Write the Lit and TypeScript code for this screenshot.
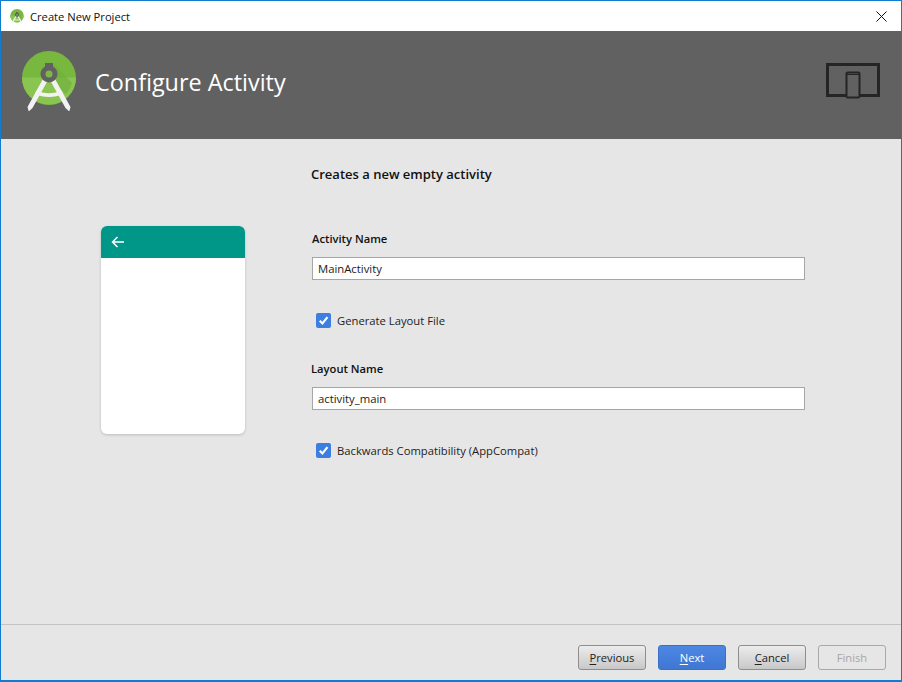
import { LitElement, html, css, svg } from "lit";
import { customElement } from "lit/decorators.js";

const logo = (w: number, h: number) => html`<svg class="logo" width=${w} height=${h} viewBox="0 0 54 60" aria-hidden="true">
  <circle cx="27" cy="27" r="27" fill="#78b83f"/>
  <path d="M0 26.500a27 27 0 0 0 54 0z" fill="#8ac451"/>
  <path d="M32 13 50 32a27 27 0 0 1-6 11L27 30z" fill="#6fae3a" opacity=".6"/>
  <path d="M23 12h8v6h-8z" fill="#616161"/>
  <path d="M21.500 27 5.500 56l1.200 4.500L10.500 57 25.500 30zM32.500 27 48.500 56l-1.200 4.500L43.500 57 28.500 30z" fill="#f2f2f2"/>
  <path d="M14.500 39.500c4 1.800 8 2.700 12.500 2.700s8.500-.9 12.500-2.700l1.700 3.600c-4.300 2-9 3-14.200 3s-9.900-1-14.200-3z" fill="#f2f2f2"/>
  <circle cx="27" cy="23" r="8.500" fill="#616161"/>
  <circle cx="27" cy="23" r="3.500" fill="#7cb843"/>
</svg>`;

const check = svg`<path d="M3.500 7.300 6 9.800l4.700-6" fill="none" stroke="#fff" stroke-width="2"/>`;

@customElement("app-root")
export class AppRoot extends LitElement {
  static styles = css`
    :host { display: block; }
    * { box-sizing: border-box; }
    .window {
      width: 902px; height: 682px; display: flex; flex-direction: column;
      border: 1px solid #0f7ccf; border-bottom-width: 2px; background: #e6e6e6;
      font-family: "Open Sans", "Noto Sans", sans-serif; color: #111; overflow: hidden;
    }
    .titlebar {
      height: 30px; flex: none; background: #fff; display: flex; align-items: center;
      padding: 0 14px 0 9px; gap: 6px; font-size: 11.2px;
    }
    .titlebar .name { flex: 1; }
    .close { display: block; }
    .header {
      height: 108px; flex: none; background: #616161; display: flex; align-items: center;
      padding: 0 21px 8px 21px;
    }
    .header h1 {
      flex: 1; margin: 2px 0 0 19px; font-size: 23.4px; font-weight: 400; color: #fff;
    }
    .body { flex: 1; display: flex; align-items: flex-start; }
    .preview {
      width: 144px; height: 208px; margin: 87px 0 0 100px; flex: none; background: #fff;
      border-radius: 6px; box-shadow: 0 1px 3px rgba(0,0,0,.18); overflow: hidden;
    }
    .appbar { height: 32px; background: #009688; display: flex; align-items: center; padding-left: 10px; }
    .form { margin-left: 66px; width: 494px; display: flex; flex-direction: column; }
    .lead { margin: 25px 0 0; font-size: 13px; line-height: 20px; font-weight: 600; color: #111; }
    .label { font-size: 11.2px; line-height: 16px; font-weight: 600; margin-top: 47px; }
    .label.second { margin-top: 31px; }
    .label.first { margin-left: 1px; }
    .field {
      height: 23px; margin: 10px 0 0 1px; background: #fff; border: 1px solid #a6a6a6;
      font-size: 11.3px; line-height: 21px; padding-left: 5px; color: #1a1a1a;
    }
    .check { display: flex; align-items: center; gap: 6px; margin: 30px 0 0 5px; height: 20px; font-size: 11.25px; color: #222; }
    .box { width: 15px; height: 15px; border-radius: 2px; background: #3d7fe0; display: block; flex: none; }
    .footer {
      height: 56px; flex: none; border-top: 1px solid #c4c4c4; display: flex; justify-content: flex-end;
      gap: 12px; padding: 20px 15px 0 0;
    }
    .btn {
      width: 68px; height: 25px; border: 1px solid #8e8e8e; border-radius: 3px; font-size: 11.2px;
      display: flex; align-items: center; justify-content: center; color: #222;
      background: linear-gradient(#ececec, #c8c8c8);
    }
    .btn.primary { background: linear-gradient(#4d87e4, #3f77d3); border-color: #3b70c6; color: #fff; }
    .btn.off { background: #e6e6e6; border-color: #a8a8a8; color: #a6a6a6; }
    u { text-underline-offset: 2px; }
  `;

  render() {
    return html`<div class="window">
      <div class="titlebar">
        ${logo(14, 15)}
        <span class="name">Create New Project</span>
        <svg class="close" width="11" height="11" viewBox="0 0 11 11" aria-hidden="true">
          <path d="M.5.500l10 10M10.500.500l-10 10" stroke="#111" fill="none"/>
        </svg>
      </div>
      <div class="header">
        ${logo(54, 60)}
        <h1>Configure Activity</h1>
        <svg width="54" height="36" viewBox="0 0 54 36" aria-hidden="true">
          <rect x="1.500" y="1.500" width="51" height="31" fill="none" stroke="#252525" stroke-width="3"/>
          <rect x="20.500" y="9.500" width="13" height="25" rx="1" fill="#616161" stroke="#252525" stroke-width="2"/>
          <path d="M20 11.500h14" stroke="#252525" stroke-width="1"/>
        </svg>
      </div>
      <div class="body">
        <div class="preview">
          <div class="appbar">
            <svg width="14" height="12" viewBox="0 0 14 12" aria-hidden="true">
              <path d="M13 6H1.500M6.500 1 1.500 6l5 5" fill="none" stroke="#fff" stroke-width="1.500"/>
            </svg>
          </div>
        </div>
        <div class="form">
          <p class="lead">Creates a new empty activity</p>
          <div class="label first">Activity Name</div>
          <div class="field">MainActivity</div>
          <div class="check"><svg class="box" viewBox="0 0 14 14" aria-hidden="true">${check}</svg>Generate Layout File</div>
          <div class="label second">Layout Name</div>
          <div class="field">activity_main</div>
          <div class="check"><svg class="box" viewBox="0 0 14 14" aria-hidden="true">${check}</svg>Backwards Compatibility (AppCompat)</div>
        </div>
      </div>
      <div class="footer">
        <div class="btn"><span><u>P</u>revious</span></div>
        <div class="btn primary"><span><u>N</u>ext</span></div>
        <div class="btn"><span><u>C</u>ancel</span></div>
        <div class="btn off"><span>Finish</span></div>
      </div>
    </div>`;
  }
}
